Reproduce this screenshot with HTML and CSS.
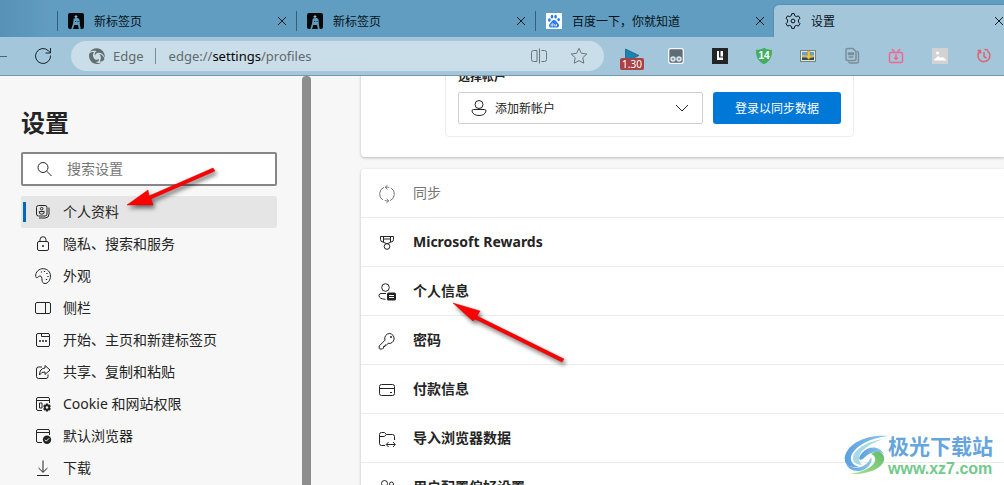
FILE: index.html
```html
<!DOCTYPE html>
<html lang="zh-CN">
<head>
<meta charset="utf-8">
<title>设置</title>
<link rel="stylesheet" href="styles.css">
</head>
<body>
<div class="browser">
  <div class="tabs">
    <div class="tab">
      <svg class="icon" viewBox="0 0 16 16"><rect width="16" height="16" rx="2" fill="#05090c"/><path d="M3.300 16L5.500 9V6L7 5h3l1.500 1.500V9l1.200 7H10.800L10 12H6.300L5 16Z" fill="#5d98ba"/><path d="M5.500 9.500L6 6.500h5l.5 3-2 2.500h-2Z" fill="#619dc0"/><path d="M6.300 3.300L8 2.300l1.700 1-1 1.400H7.200Z" fill="#8fb5ca"/><path d="M7.200 8h.9v1h-.9zM9.600 8h.9v1h-.9z" fill="#05090c"/></svg>
      <span class="tab-title">新标签页</span>
      <button class="close" aria-label="关闭标签页"><svg viewBox="0 0 10 10"><path d="M1 1l8 8M9 1L1 9"/></svg></button>
    </div>
    <div class="tab">
      <svg class="icon" viewBox="0 0 16 16"><rect width="16" height="16" rx="2" fill="#05090c"/><path d="M3.300 16L5.500 9V6L7 5h3l1.500 1.500V9l1.200 7H10.800L10 12H6.300L5 16Z" fill="#5d98ba"/><path d="M5.500 9.500L6 6.500h5l.5 3-2 2.500h-2Z" fill="#619dc0"/><path d="M6.300 3.300L8 2.300l1.700 1-1 1.400H7.200Z" fill="#8fb5ca"/><path d="M7.200 8h.9v1h-.9zM9.600 8h.9v1h-.9z" fill="#05090c"/></svg>
      <span class="tab-title">新标签页</span>
      <button class="close" aria-label="关闭标签页"><svg viewBox="0 0 10 10"><path d="M1 1l8 8M9 1L1 9"/></svg></button>
    </div>
    <div class="tab">
      <svg class="icon" viewBox="0 0 16 16"><rect width="16" height="16" fill="#fff"/><g fill="#2b7be9"><ellipse cx="3.400" cy="7" rx="1.400" ry="1.800"/><ellipse cx="6" cy="3.700" rx="1.300" ry="1.900"/><ellipse cx="9.600" cy="3.700" rx="1.300" ry="1.900"/><ellipse cx="12.600" cy="6.600" rx="1.300" ry="1.700"/><path d="M8 7C10 7 10.600 9 12 10.300C14.300 12.500 12.500 15 10.500 14.600C8.700 14.300 7.300 14.300 5.500 14.600C3.300 14.900 2 12.300 4 10.400C5.500 9 6 7 8 7Z"/></g><path d="M7 10v3H5.800a.9.900 0 0 1 0-1.800H7M8.700 11v2h1.800v-2" fill="none" stroke="#fff" stroke-width=".7"/></svg>
      <span class="tab-title">百度一下，你就知道</span>
      <button class="close" aria-label="关闭标签页"><svg viewBox="0 0 10 10"><path d="M1 1l8 8M9 1L1 9"/></svg></button>
    </div>
    <div class="tab tab-active">
      <svg class="icon line" viewBox="0 0 16 16"><path d="M6.800.6h2.400l.5 2.100 1.600.9 2.100-.7 1.600 2.300L13.400 7v2l1.600 1.700-1.600 2.400-2.100-.7-1.600.9-.5 2.100H6.800l-.5-2.100-1.600-.9-2.100.7L1 10.700 2.600 9V7L1 5.200l1.600-2.300 2.100.7 1.600-.9Z" stroke-linejoin="round"/><circle cx="8" cy="8" r="1.900"/></svg>
      <span class="tab-title">设置</span>
      <button class="close" aria-label="关闭标签页"><svg viewBox="0 0 10 10"><path d="M1 1l8 8M9 1L1 9"/></svg></button>
    </div>
  </div>

  <div class="toolbar">
    <span class="forward"></span>
    <button class="refresh" aria-label="刷新"><svg viewBox="0 0 18 18"><path d="M16.500 8.500A7.500 7.500 0 1 1 14.300 3.700L16.300 5.600M16.500 1v5h-5"/></svg></button>
    <div class="address">
      <svg class="icon" viewBox="0 0 16 16"><g fill="#656d71"><path d="M.8 4C3 .2 8-1 12 1.500C15 3.500 16.300 7 15.600 9.700C14.800 6.500 12.300 4.600 9.700 4.800C7.300 5 6.300 6.300 6.200 7.500C5 6 5.800 4 7.700 3.200C5 2.400 2.500 2.900.8 4Z"/><path d="M.2 5.700C1.700 3.900 3.700 3.700 5 4.300C3.500 6 3.500 9 5.500 10.900C7 12.200 9 12 10 11C10.300 13 8.500 14.200 6.500 14C9 15.200 11 15.100 12.800 14.200C9 17.200 4.500 16.300 2 13.300C.2 11.200-.2 8 .2 5.700Z"/><path d="M10.300 6C13 6.300 15 8.500 15.400 11C15 12.800 13 14 10.700 13.300C12.500 11.200 12.300 8 10.300 6Z"/></g></svg>
      <span class="brand">Edge</span>
      <span class="divider"></span>
      <span class="url">edge://<b>settings</b>/profiles</span>
      <button class="pill-btn" aria-label="分屏"><svg viewBox="0 0 18 18"><path d="M7 3.500H3.500a2 2 0 0 0-2 2v7a2 2 0 0 0 2 2H7ZM9.500 1.500v15M11.500 3.500h3a2 2 0 0 1 2 2v7a2 2 0 0 1-2 2h-3"/></svg></button>
      <button class="pill-btn" aria-label="收藏"><svg viewBox="0 0 18 18"><path d="M9 1.300l2.400 5 5.400.7-4 3.700 1 5.500L9 13.600l-4.800 2.600 1-5.500-4-3.700 5.400-.7Z" stroke-linejoin="round"/></svg></button>
    </div>
    <div class="extensions">
      <button class="ext" aria-label="视频速度"><svg viewBox="0 0 24 24"><path d="M5.500 5L19 11.500 5.500 18Z" fill="#1585b5" stroke="#2c5268" stroke-width=".7"/></svg><span class="badge">1.30</span></button>
      <button class="ext" aria-label="脚本管理"><svg viewBox="0 0 24 24"><rect x="4.700" y="4.700" width="14.600" height="14.600" rx="2" fill="#5f6b75" stroke="#f5f8fa" stroke-width="1.300"/><circle cx="9" cy="15" r="2" fill="#8ca0ad" stroke="#dce8ef" stroke-width="1.500"/><circle cx="15" cy="15" r="2" fill="#8ca0ad" stroke="#dce8ef" stroke-width="1.500"/></svg></button>
      <button class="ext" aria-label="划词"><svg viewBox="0 0 24 24"><path fill="#222426" d="M4 4h16v16H4z"/><path d="M9 7h2v6.500h4V16H9ZM12.500 7H15v5.500h-2.500Z" fill="#fff"/></svg></button>
      <button class="ext" aria-label="广告拦截"><svg viewBox="0 0 24 24"><path fill="#43ad61" d="M12 3.800c2.200 1.500 4.600 2 8 2 .3 6-1.600 11.600-8 14.400C5.600 17.400 3.700 11.800 4 5.800c3.400 0 5.800-.5 8-2Z"/><text x="12" y="15" class="shield-text">14</text></svg></button>
      <button class="ext" aria-label="图片下载"><svg viewBox="0 0 24 24"><rect x="4.500" y="6.500" width="15" height="11" fill="#e3e6df" stroke="#76847e"/><path fill="#58a6d5" d="M6 8h12v5H6z"/><path fill="#d9b46a" d="M6 11h12v2H6z"/><path fill="#344c50" d="M6 13.500c4-1 8 1 12-.5v3H6z"/><path fill="#f2c33c" stroke="#b98b20" stroke-width=".4" d="M11.500 7h2.500v4.500h2.200L12.700 15.500 9.200 11.500h2.300Z"/></svg></button>
      <button class="ext" aria-label="复制"><svg viewBox="0 0 24 24" fill="none" stroke="#7b8f9b"><path d="M8 4.500h5l3 3v7.500q0 1.500-1.500 1.500H8Q6 16.500 6 15V6Q6 4.500 8 4.500Z" stroke-width="1.500"/><path d="M8.500 9h5v1.500h-5ZM8.500 13h5" stroke-width="1.300"/><path d="M17 7q1.500 1 1.500 2.500v7.500q0 2-2 2H11q-2 0-2.500-1.500" stroke-width="1.500"/></svg></button>
      <button class="ext" aria-label="视频下载"><svg viewBox="0 0 24 24" fill="none" stroke="#f0698d" stroke-width="1.500"><rect x="5.500" y="8.500" width="13" height="10" rx="1.500"/><path d="M8 5l2.500 3M16 5l-2.500 3M12 10v5M10 13.500l2 2 2-2"/></svg></button>
      <button class="ext" aria-label="图片"><svg viewBox="0 0 24 24"><path fill="#d1d2d2" d="M4 4h16v16H4z"/><path fill="#fff" d="M6 16l4-4 3 2 2-1 3.500 3.500H6Z"/><circle cx="9.500" cy="9" r="1.600" fill="#fff"/></svg></button>
      <button class="ext" aria-label="历史记录"><svg viewBox="0 0 24 24" fill="none" stroke="#db6470" stroke-width="1.500"><path d="M8 7.100a6 6 0 1 0 7.500-.3M5.500 6.500h3v3M12 8v4.500l2.500 1.500M12.500 5.500L16 6"/></svg></button>
    </div>
  </div>

  <div class="page">
    <aside class="sidebar">
      <h1>设置</h1>
      <label class="search">
        <svg class="icon line" viewBox="0 0 16 16"><circle cx="6" cy="6.500" r="5"/><path d="M9.700 10.200L14.500 15"/></svg>
        <input type="text" placeholder="搜索设置" aria-label="搜索设置">
      </label>
      <nav>
        <a href="#profiles" class="current"><svg class="icon line" viewBox="0 0 16 16"><rect x="1.500" y="1.500" width="10.500" height="10.500" rx="2"/><circle cx="6.700" cy="4.700" r="1.300"/><path d="M4.200 7.500h5q.3 2.700-2.500 2.700T4.200 7.500ZM14 3.500v6.500q0 4-4 4H4"/></svg>个人资料</a>
        <a href="#privacy"><svg class="icon line" viewBox="0 0 16 16"><rect x="2.500" y="5.500" width="11" height="9" rx="1.500"/><path d="M5 5.500V3.700a3 3 0 0 1 6 0v1.800"/><circle cx="8" cy="10" r=".6" fill="currentColor"/></svg>隐私、搜索和服务</a>
        <a href="#appearance"><svg class="icon line" viewBox="0 0 16 16"><path d="M.7 8.500C.2 4 4 .5 8.500.7c4 .2 7 3.300 7 7.300 0 4-2.500 7.500-5.500 7.500-2 0-3-1.500-3-3.500 0-2.500-.5-4-2-4-1.200 0-1.500 1-2.700 1.500C1.200 10 .7 9.300.7 8.500Z"/><path d="M6.500 3.500v1M9.500 3v1M12 5v1M13 8v1M11.500 11v1" stroke-width="1.300"/></svg>外观</a>
        <a href="#sidebar"><svg class="icon line" viewBox="0 0 16 16"><rect x=".5" y="2.500" width="15" height="11" rx="1.500"/><path d="M10.500 2.500v11"/></svg>侧栏</a>
        <a href="#start"><svg class="icon line" viewBox="0 0 16 16"><rect x="1.500" y="1.500" width="13" height="13" rx="1.500"/><path d="M6.500 1.500v3h8"/><path d="M4 9h2M7 9h2M10 9h2" stroke-width="1.500"/></svg>开始、主页和新建标签页</a>
        <a href="#share"><svg class="icon line" viewBox="0 0 16 16"><path d="M7 3H3.500Q1.500 3 1.500 5v7.500q0 2 2 2H11q2 0 2-2v-2"/><path d="M10 1.500L15 6l-5 4.500V8Q6.500 7.500 4.500 11 4.500 4.500 10 4Z" stroke-linejoin="round"/></svg>共享、复制和粘贴</a>
        <a href="#cookies"><svg class="icon line" viewBox="0 0 16 16"><path d="M7 14.500H3Q1.500 14.500 1.500 13V3Q1.500 1.500 3 1.500h10q1.500 0 1.500 1.500v4M1.500 4.500h13M4.500 7h2.500v5H4.500Z"/><path fill="currentColor" stroke="none" d="M11 7.500h2l.4 1.300 1.500-.3.900 1.700-.9 1.300.9 1.300-.9 1.700-1.500-.3-.4 1.300h-2l-.4-1.300-1.500.3-.9-1.700.9-1.300-.9-1.300.9-1.700 1.500.3Z"/><circle cx="12" cy="11.500" r="1.200" fill="#f7f7f7" stroke="none"/></svg>Cookie 和网站权限</a>
        <a href="#default"><svg class="icon line" viewBox="0 0 16 16"><path d="M7 14.500H3Q1.500 14.500 1.500 13V3Q1.500 1.500 3 1.500h10q1.500 0 1.500 1.500v4M1.500 4.500h13"/><circle cx="12" cy="11.700" r="4.200" fill="currentColor" stroke="none"/><path d="M10 11.800l1.300 1.300 2.700-2.700" stroke="#fff"/></svg>默认浏览器</a>
        <a href="#downloads"><svg class="icon line" viewBox="0 0 16 16"><path d="M8 .5v11.700M3.500 8L8 12.300 12.500 8M2 15.500h12"/></svg>下载</a>
      </nav>
    </aside>
    <div class="scrollbar"></div>

    <main>
      <section class="card account-card">
        <div class="account-box">
          <label for="account">选择帐户</label>
          <div class="account-row">
            <div class="select-wrap">
              <svg class="person line" viewBox="0 0 16 18"><circle cx="8" cy="5.500" r="4"/><path d="M2.500 10.500h11q1.500 0 1.500 1.500-1 4.500-7 4.500T1 12q0-1.500 1.500-1.500Z"/></svg>
              <select id="account"><option>添加新帐户</option></select>
              <svg class="chevron line" viewBox="0 0 14 8"><path d="M1 1l6 6 6-6"/></svg>
            </div>
            <button class="signin">登录以同步数据</button>
          </div>
        </div>
      </section>
      <section class="card rows">
        <a href="#sync" class="row disabled"><svg class="row-icon line" viewBox="0 0 18 18"><path d="M6 2.300A7.300 7.300 0 0 0 4.800 15M12 15.700A7.300 7.300 0 0 0 13.200 3M9.500.3L7.200 2.200l2.300 2.100M7.200 2.200q2.500-.3 4 .3M8.500 13.700l2.300 2.100-2.300 2M10.800 15.800q-2.500.3-4-.3"/></svg>同步</a>
        <a href="#rewards" class="row"><svg class="row-icon line" viewBox="0 0 18 18"><path d="M2.500 2.500h13v2.700Q15.500 8 13 8L9.800 9.500H8.200L5 8Q2.500 8 2.500 5.200ZM5.500 2.500V8M12.500 2.500V8M5.500 5h7"/><circle cx="9" cy="12.500" r="2.800"/></svg>Microsoft Rewards</a>
        <a href="#personal" class="row"><svg class="row-icon line" viewBox="0 0 18 18"><circle cx="7.500" cy="4.500" r="3.800"/><path d="M8 10.500H3Q1 10.500 1 12.500q0 3.500 6.500 3.800"/><rect x="9" y="9.500" width="9" height="8" rx="1.500" fill="currentColor" stroke="none"/><path d="M11 12.500h5M11 14.500h5" stroke="#fff"/></svg>个人信息</a>
        <a href="#passwords" class="row"><svg class="row-icon line" viewBox="0 0 18 18"><path d="M11.500 1.500a5 5 0 1 1-1.300 9.900L8.500 13H7v1.500H5.500V16l-1 1H2q-.8 0-.8-.8V14L7 8.200A5 5 0 0 1 11.500 1.500Z"/><circle cx="13" cy="5" r=".6" fill="currentColor"/></svg>密码</a>
        <a href="#payment" class="row"><svg class="row-icon line" viewBox="0 0 18 18"><rect x="1.500" y="3.500" width="15" height="11" rx="2"/><path d="M1.500 7.500h15M12 11.500h2"/></svg>付款信息</a>
        <a href="#import" class="row"><svg class="row-icon line" viewBox="0 0 18 18"><path d="M7 15.500H3.500q-2 0-2-2v-9q0-2 2-2h3L8.500 4.500h6q2 0 2 2V10M1.500 6.500h4.700L8.500 4.500M8.500 14.500h8.500M10.500 12l-2.300 2.500 2.300 2.500M15 12l2.300 2.500L15 17"/></svg>导入浏览器数据</a>
        <a href="#preferences" class="row"><svg class="row-icon line" viewBox="0 0 18 18"><circle cx="6.500" cy="4.500" r="3"/><circle cx="13.500" cy="5" r="2"/><path d="M1.500 14q0-4 5-4t5 4"/></svg>用户配置偏好设置</a>
      </section>
    </main>
  </div>
</div>

<svg class="arrow arrow-one" viewBox="0 0 100 50"><path d="M6 40L27 25 28 31 92 3 94 6 30 34 32 40Z"/></svg>
<svg class="arrow arrow-two" viewBox="0 0 125 70"><path d="M3 3L30 11 27 16 114 59 112 62 25 19 23 21Z"/></svg>

<div class="watermark">
  <svg viewBox="0 0 44 44">
    <defs><linearGradient id="sky" x1="0" x2="1"><stop stop-color="#5a9fdf"/><stop offset="1" stop-color="#8fc8ea"/></linearGradient><linearGradient id="leaf" x1="1" y1="0" x2="0" y2="1"><stop stop-color="#62bd6c"/><stop offset="1" stop-color="#a9e090"/></linearGradient></defs>
    <path fill="url(#sky)" d="M44 2C27 0 5 7 1 22C-1 31 6 34 15 33C8 31 5 26 8 20C13 11 26 4 44 2Z"/>
    <path fill="#a8d9e6" d="M39 5C25 7 11 14 9 23C8 28 13 31 18 31C14 27 14 22 18 17C23 12 30 8 39 5Z"/>
    <path fill="url(#sky)" d="M18 19C25 11 36 12 40 20C35 17 27 17 21 23C17 28 12 26 18 19Z"/>
    <path fill="url(#leaf)" d="M27 20C33 16 39 18 40 23C42 32 27 41 6 40C20 38 29 33 31 27C32 24 30 21 27 20Z"/>
    <path fill="url(#sky)" d="M2 30C12 38 24 32 27 23C30 29 22 37 14 37C8 37 4 34 2 30Z"/>
  </svg>
  <div><div class="wm-name">极光下载站</div><div class="wm-url">www.xz7.com</div></div>
</div>
</body>
</html>
```

FILE: styles.css
```css
* { box-sizing: border-box; }
body {
  margin: 0;
  font-family: "Noto Sans", "Noto Sans CJK SC", sans-serif;
  font-size: 14px;
  color: #242424;
  overflow: hidden;
}
button { border: 0; padding: 0; background: none; font: inherit; color: inherit; }
a { color: inherit; text-decoration: none; }
svg { display: block; flex: none; overflow: visible; }
.icon { width: 16px; height: 16px; }
.line { fill: none; stroke: currentColor; stroke-width: 1; }
.browser { display: flex; flex-direction: column; height: 100vh; position: relative; }

.tabs {
  display: flex;
  height: 37px;
  padding: 5px 0 0 57px;
  background: linear-gradient(90deg, #5792b6, #619dc0 50px);
  overflow: hidden;
}
.tab {
  display: flex;
  align-items: center;
  flex: 0 0 239px;
  padding: 0 9px 0 11px;
  font-size: 12px;
  color: #06121a;
  background: linear-gradient(#315e78, #315e78) 0 6px / 1px 20px no-repeat;
}
.tab-active { background: #a3c6da; border-radius: 5px 5px 0 0; box-shadow: 0 0 2px #3f7796; }
.tab-title { flex: 1; margin-left: 10px; }
.close svg { width: 10px; height: 10px; fill: none; stroke: #101b22; stroke-width: 1; }

.toolbar {
  display: flex;
  align-items: center;
  height: 39px;
  padding-right: 8px;
  background: #a3c6da;
  border-bottom: 1px solid #7799ae;
}
.forward { width: 7px; height: 1px; background: #51656f; }
.refresh { margin: 0 19px 0 27px; }
.refresh svg { width: 18px; height: 18px; fill: none; stroke: #14242d; stroke-width: 1; }
.address {
  display: flex;
  align-items: center;
  flex: 1;
  height: 30px;
  margin-right: 16px;
  padding: 0 16px 0 18px;
  border-radius: 15px;
  background: #cadee9;
  color: #62696d;
  font-size: 13px;
}
.brand { margin-left: 8px; }
.divider { width: 1px; height: 16px; margin: 0 13px 0 11px; background: #7b8c96; }
.url { flex: 1; }
.url b { font-weight: 400; color: #050505; }
.pill-btn { margin-left: 22px; }
.pill-btn svg { width: 18px; height: 18px; fill: none; stroke: #69757c; stroke-width: 1; }
.extensions { display: flex; gap: 20px; }
.ext { position: relative; width: 24px; height: 24px; }
.ext svg { width: 24px; height: 24px; }
.badge {
  position: absolute;
  top: 14px;
  left: 0;
  width: 24px;
  border-radius: 2px;
  background: #a84246;
  color: #fff;
  font-size: 10px;
  line-height: 12px;
  text-align: center;
}
.shield-text { font: bold 10px "Liberation Sans", sans-serif; fill: #fff; text-anchor: middle; }

.page { display: flex; flex: 1; min-height: 0; background: #f7f7f7; }
.sidebar { flex: 0 0 302px; padding: 30px 25px 0 21px; overflow: hidden; }
h1 { margin: 0 0 12px; font-size: 24px; line-height: 34px; font-weight: 700; }
.search {
  display: flex;
  align-items: center;
  height: 34px;
  margin-bottom: 10px;
  padding: 0 14px;
  border: 2px solid #868686;
  border-radius: 2px;
  background: #fff;
}
.search input {
  flex: 1;
  min-width: 0;
  margin-left: 14px;
  padding: 0 0 2px;
  border: 0;
  outline: 0;
  background: none;
  font: inherit;
}
.search input::placeholder { color: #767676; }
nav a { display: flex; align-items: center; gap: 12px; height: 32px; padding: 0 0 2px 14px; }
nav .icon { margin-top: 2px; }
nav .current {
  background: linear-gradient(#0067c0, #0067c0) 2px 6px / 3px 20px no-repeat #e5e5e5;
  border-radius: 2px;
}
.scrollbar { flex: 0 0 9px; background: #8e8e8e; border-radius: 4px 4px 0 0; }

main { flex: 1; padding-left: 50px; overflow: hidden; }
.card { background: #fff; border-radius: 4px 0 0 4px; box-shadow: 0 1px 3px #b8b8b8; }
.account-card { margin: -40px 0 12px; padding: 20px 0 20px 84px; }
.account-box {
  width: 409px;
  padding: 10px 12px 12px;
  border: 1px solid #ededed;
  border-radius: 4px;
}
.account-box label { display: block; margin-bottom: 5px; font-size: 12px; line-height: 20px; font-weight: 600; }
.account-row { display: flex; gap: 10px; }
.select-wrap { position: relative; flex: 1; }
select {
  display: block;
  width: 100%;
  height: 32px;
  padding: 0 32px 0 36px;
  appearance: none;
  border: 1px solid #cfcfcf;
  border-radius: 2px;
  background: #fff;
  color: #242424;
  font: inherit;
  font-size: 12px;
}
.person { position: absolute; left: 13px; top: 7px; width: 16px; height: 18px; }
.chevron { position: absolute; right: 14px; top: 12px; width: 14px; height: 8px; }
.signin { width: 128px; height: 32px; border-radius: 3px; background: #0078d7; color: #fff; font-size: 12px; }
.row {
  display: flex;
  align-items: center;
  gap: 17px;
  height: 49px;
  padding: 0 0 2px 17px;
  border-bottom: 1px solid #ebebeb;
  font-weight: 700;
}
.row-icon { width: 18px; height: 18px; margin-top: 4px; }
.disabled { color: #767676; font-weight: 400; }

.arrow { position: absolute; fill: #fe0000; stroke: #d00000; stroke-width: 0.500; filter: drop-shadow(2px 3px 2px #0008); pointer-events: none; }
.arrow-one { left: 121px; top: 165px; width: 100px; height: 50px; }
.arrow-two { left: 450px; top: 300px; width: 125px; height: 70px; }
.watermark {
  position: absolute;
  left: 844px;
  top: 433px;
  display: flex;
  align-items: center;
  font-weight: 700;
  white-space: nowrap;
}
.watermark svg { width: 44px; height: 44px; }
.wm-name { color: #66a5dc; font-size: 21px; line-height: 26px; }
.wm-url { color: #73c98b; font-family: "Liberation Sans", sans-serif; font-size: 16px; line-height: 20px; }
```
